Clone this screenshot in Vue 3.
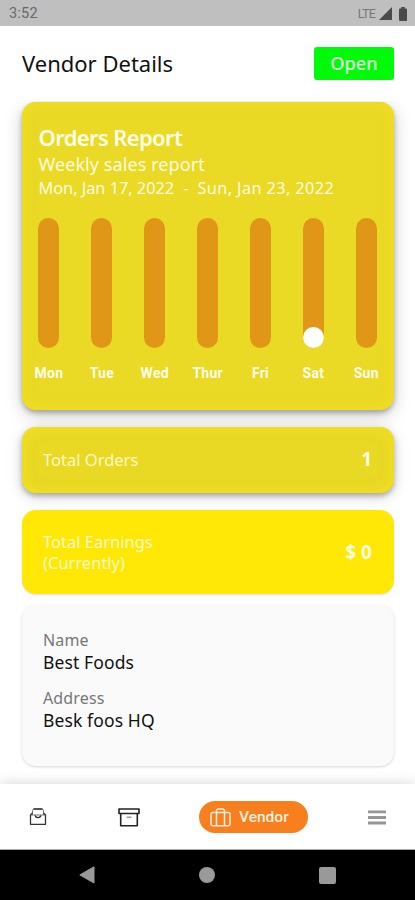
<script setup>
const days = [
  { name: 'Mon' },
  { name: 'Tue' },
  { name: 'Wed' },
  { name: 'Thur' },
  { name: 'Fri' },
  { name: 'Sat', dot: true },
  { name: 'Sun' },
]
</script>

<template>
  <div class="screen">
    <div class="status">
      <span class="time">3:52</span>
      <span class="lte">LTE</span>
      <svg class="signal" width="13" height="13" viewBox="0 0 13 13"><path d="M13 0V13H0Z" fill="#494949" /></svg>
      <svg class="battery" width="8" height="14" viewBox="0 0 8 14"><path d="M2.2 0h3.6v1.5H7q1 0 1 1V13q0 1-1 1H1q-1 0-1-1V2.500q0-1 1-1h1.200z" fill="#494949" /></svg>
    </div>

    <header class="header">
      <h1 class="title">Vendor Details</h1>
      <button class="open">Open</button>
    </header>

    <main class="content">
      <section class="card report">
        <h2 class="report-title">Orders Report</h2>
        <div class="subtitle">Weekly sales report</div>
        <div class="dates"><span class="from">Mon, Jan 17, 2022</span><span class="dash">-</span><span class="to">Sun, Jan 23, 2022</span></div>
        <div class="chart">
          <div v-for="day in days" :key="day.name" class="day">
            <div class="bar"><div v-if="day.dot" class="dot"></div></div>
            <span class="label">{{ day.name }}</span>
          </div>
        </div>
      </section>

      <section class="card orders">
        <span class="stat-name">Total Orders</span>
        <span class="value">1</span>
      </section>

      <section class="card earnings">
        <span class="stat-name">Total Earnings<br />(Currently)</span>
        <span class="value">$ 0</span>
      </section>

      <section class="card info">
        <div class="key">Name</div>
        <div class="val">Best Foods</div>
        <div class="key">Address</div>
        <div class="val">Besk foos HQ</div>
      </section>
    </main>

    <nav class="tabs">
      <svg class="inbox" width="18" height="18" viewBox="0 0 18 18" fill="none" stroke="#333" stroke-width="1.300" stroke-linejoin="round">
        <path d="M1.500 7H16.500M3.500 7V2.800Q3.500 1 5.300 1H12.700Q14.500 1 14.500 2.800V7" stroke="#777" stroke-width="1" />
        <path d="M3.500 5L1.500 7V16.300H16.500V7L14.500 5M4.500 1H13.500" />
        <path d="M6 7.500Q6.800 9.700 9 9.700T12 7.500" stroke="#222" />
      </svg>
      <svg class="archive" width="22" height="19" viewBox="0 0 22 19" fill="none" stroke="#222" stroke-width="1.600">
        <path d="M1 1H21V5.500H1ZM2.700 5.500V17.800H19.300V5.500" stroke-linejoin="round" />
        <path d="M8.700 9.300H13.300" stroke="#999" />
      </svg>
      <div class="pill">
        <svg width="21" height="19" viewBox="0 0 21 19" fill="none" stroke="#ffeedd" stroke-width="1.500">
          <rect x="1" y="4.500" width="19" height="13.300" rx="2" />
          <path d="M6.500 17.800V3Q6.500 1 8.500 1H12.500Q14.500 1 14.500 3V17.800" />
        </svg>
        <span>Vendor</span>
      </div>
      <svg class="menu" width="18" height="15" viewBox="0 0 18 15" fill="#969696"><path d="M0 .4H18V3.300H0ZM0 6H18V8.900H0ZM0 11.500H18V14.400H0Z" /></svg>
    </nav>

    <div class="system">
      <svg width="16" height="18" viewBox="0 0 16 18"><path d="M15 .8V17L.8 8.900Z" fill="#999" stroke="#999" stroke-linejoin="round" /></svg>
      <div class="home"></div>
      <div class="recent"></div>
    </div>
  </div>
</template>

<style>
body { margin: 0; background: #fff; }
</style>

<style scoped>
* { box-sizing: border-box; }
.screen { width: 415px; height: 900px; display: flex; flex-direction: column; overflow: hidden; background: #fff; font-family: "Noto Sans", sans-serif; color: #111; }
.status { height: 25.500px; flex: none; background: #bfbfbf; display: flex; align-items: center; padding: 2px 8px 0 9px; font-family: Roboto, sans-serif; color: #686868; }
.time { font-size: 14.500px; flex: 1; letter-spacing: .2px; }
.lte { font-size: 12.500px; letter-spacing: -.8px; margin-right: 4px; color: #777; }
.battery { margin-left: 7px; }
.header { height: 75.500px; flex: none; display: flex; align-items: center; justify-content: space-between; padding: 0 21px 0 22px; }
.title { margin: 0; font-size: 22px; font-weight: 400; white-space: nowrap; }
.open { width: 80px; height: 33px; border: 0; border-radius: 3px; background: #00fb08; color: #e5ffe0; font: 500 18.200px "Noto Sans", sans-serif; padding: 0; }
.content { height: 683px; flex: none; overflow: hidden; padding: 1px 21px 0 22px; }
.card { border-radius: 14px; color: #fffce0; }
.report { height: 307.500px; padding: 21px 0 0 .500px; background: #ead925; box-shadow: 0 3px 5px rgba(0,0,0,.25), 0 5px 18px rgba(0,0,0,.2), inset 0 0 14px rgba(245,228,32,.7); }
.report-title { margin: 0 0 0 16px; font-size: 22px; line-height: 29px; font-weight: 600; letter-spacing: -.640px; color: #fffde8; }
.subtitle { margin-left: 16px; font-size: 18px; line-height: 25px; letter-spacing: .080px; }
.dates { margin-left: 16px; font-size: 16.300px; line-height: 22px; display: flex; white-space: nowrap; }
.dash { margin: 0 9px; }
.to { letter-spacing: .400px; }
.chart { margin-top: 19px; display: flex; }
.day { width: 52.900px; flex: none; display: flex; flex-direction: column; align-items: center; }
.bar { width: 21px; height: 130px; border-radius: 11px; background: #e09718; display: flex; align-items: flex-end; }
.dot { width: 21px; height: 21px; border-radius: 50%; background: #fff; }
.label { margin-top: 15px; font: 700 14px/20px Roboto, sans-serif; letter-spacing: .250px; color: #fffdec; }
.orders, .earnings { display: flex; align-items: center; justify-content: space-between; padding: 0 22px 0 21px; }
.orders { height: 66px; margin-top: 17px; padding-bottom: 1px; background: #e9d824; box-shadow: 0 3px 5px rgba(0,0,0,.25), 0 3px 15px rgba(0,0,0,.18), inset 0 0 14px rgba(248,230,32,.8); }
.earnings { height: 84px; margin-top: 17px; padding-top: 1px; background: #ffe706; position: relative; box-shadow: 0 1px 2px rgba(0,0,0,.12); }
.stat-name { font-size: 16.500px; line-height: 21px; color: #fffac8; }
.value { font-size: 19px; font-weight: 700; color: #fffde0; }
.info { height: 161px; margin-top: 11.500px; padding: 23.500px 21px; background: #fafafa; box-shadow: 0 1px 3px rgba(0,0,0,.16); color: #111; }
.key { font-size: 16px; line-height: 22px; color: #777; letter-spacing: .150px; }
.val { font-size: 17.500px; line-height: 23px; margin-bottom: 13px; letter-spacing: .120px; }
.tabs { height: 66px; flex: none; background: #fff; display: flex; align-items: center; position: relative; padding: 1px 29px 0 29px; box-shadow: 0 -1px 12px rgba(0,0,0,.15); border-bottom: 1px solid #aaa; }
.archive { margin-left: 71px; }
.pill { margin-left: 59px; width: 109px; height: 32px; border-radius: 16px; background: #f87f1d; color: #fff1df; display: flex; align-items: center; padding-left: 11px; gap: 8px; font: 500 15.500px Roboto, sans-serif; }
.menu { margin-left: auto; }
.system { height: 50px; flex: none; background: #000; display: flex; align-items: center; padding: 0 79px; justify-content: space-between; }
.home { width: 16px; height: 16px; border-radius: 50%; background: #999; }
.recent { width: 17px; height: 17px; border-radius: 2px; background: #999; }
</style>
